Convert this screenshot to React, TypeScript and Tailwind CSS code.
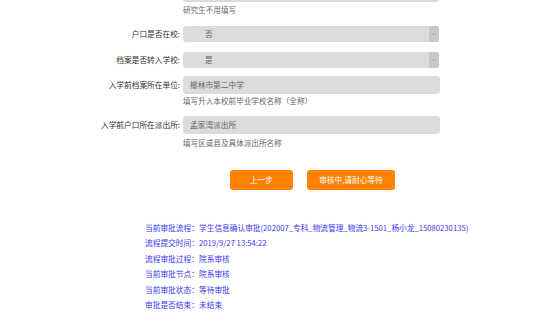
const font = { fontFamily: '"Noto Sans CJK SC", "Noto Sans", sans-serif' };

const Chevron = () => (
  <svg width="6" height="4" viewBox="0 0 6 4" fill="none">
    <path d="M0.8 0.8 L3 3 L5.2 0.8" stroke="#a8a8a8" strokeWidth="0.8" />
  </svg>
);

const SelectBox = ({ value }: { value: string }) => (
  <div className="flex h-[16px] w-[256px] items-center rounded-[3px] bg-[#dcdcdc]">
    <span className="flex-1 pl-[22px] text-[7.7px] text-[#666]">{value}</span>
    <span className="flex h-full w-[10px] items-center justify-center rounded-r-[3px] bg-[#c9c9c9]">
      <Chevron />
    </span>
  </div>
);

const TextBox = ({ value }: { value: string }) => (
  <div className="flex h-[18px] w-[257px] items-center rounded-[3px] bg-[#dcdcdc] pl-[7px] text-[7.7px] text-[#666]">
    {value}
  </div>
);

const Label = ({ children }: { children: string }) => (
  <div className="w-[181px] pr-[1px] text-right text-[7.7px] text-[#333]">{children}</div>
);

const Hint = ({ children }: { children: string }) => (
  <div className="pl-[183px] text-[7.6px] leading-[10px] text-[#666]">{children}</div>
);

export default function App() {
  const info = [
    ["当前审批流程：", "学生信息确认审批(202007_专科_物流管理_物流3-1501_杨小龙_15080230135)"],
    ["流程提交时间：", "2019/9/27 13:54:22"],
    ["流程审批过程：", "院系审核"],
    ["当前审批节点：", "院系审核"],
    ["当前审批状态：", "等待审批"],
    ["审批是否结束：", "未结束"],
  ];

  return (
    <div className="h-[318px] w-[554px] overflow-hidden bg-white" style={font}>
      <div className="ml-[183px] -mt-[14px] h-[16px] w-[256px] rounded-[3px] bg-[#dcdcdc]" />
      <div className="mt-[3px]">
        <Hint>研究生不用填写</Hint>
      </div>

      <div className="mt-[11px] flex items-center">
        <Label>户口是否在校:</Label>
        <div className="ml-[2px]">
          <SelectBox value="否" />
        </div>
      </div>

      <div className="mt-[10px] flex items-center">
        <Label>档案是否转入学校:</Label>
        <div className="ml-[2px]">
          <SelectBox value="是" />
        </div>
      </div>

      <div className="mt-[8px] flex items-center">
        <Label>入学前档案所在单位:</Label>
        <div className="ml-[2px]">
          <TextBox value="榆林市第二中学" />
        </div>
      </div>
      <div className="mt-[2px]">
        <Hint>填写升入本校前毕业学校名称（全称）</Hint>
      </div>

      <div className="mt-[10px] flex items-center">
        <Label>入学前户口所在派出所:</Label>
        <div className="ml-[2px]">
          <TextBox value="孟家湾派出所" />
        </div>
      </div>
      <div className="mt-[4px]">
        <Hint>填写区或县及具体派出所名称</Hint>
      </div>

      <div className="mt-[22px] flex pl-[230px]">
        <button className="h-[20px] w-[63px] rounded-[3px] bg-[#ff8200] text-[7.7px] text-white">上一步</button>
        <button className="ml-[14px] h-[20px] w-[88px] rounded-[3px] bg-[#ff8200] text-[7.7px] text-white">
          审核中,请耐心等待
        </button>
      </div>

      <div className="mt-[30px] flex flex-col pl-[145px]">
        {info.map(([k, v]) => (
          <div key={k} className="flex h-[15.5px] items-center text-[7.7px] text-[#3a3af0]">
            <span className="w-[54px] whitespace-nowrap">{k}</span>
            <span className="whitespace-nowrap">{v}</span>
          </div>
        ))}
      </div>
    </div>
  );
}
